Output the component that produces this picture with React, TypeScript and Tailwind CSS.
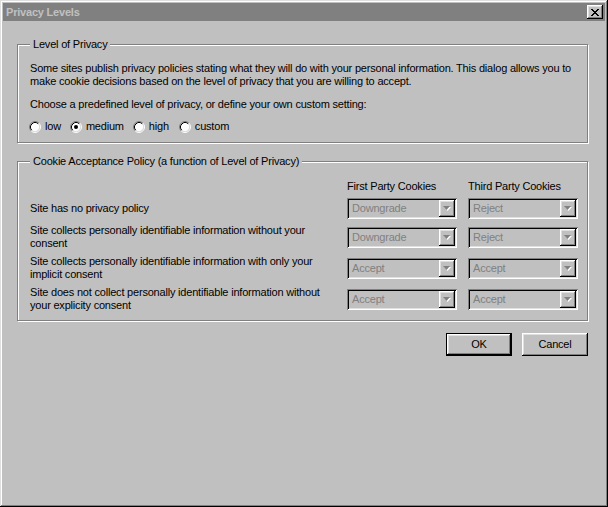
import React from 'react';

const raised =
  'shadow-[inset_-1px_-1px_0_#000,inset_1px_1px_0_#fff,inset_-2px_-2px_0_#808080,inset_2px_2px_0_#dfdfdf]';
const sunken =
  'shadow-[inset_1px_1px_0_#808080,inset_-1px_-1px_0_#fff,inset_2px_2px_0_#000,inset_-2px_-2px_0_#dfdfdf]';

function Radio({ label, checked }: { label: string; checked?: boolean }) {
  return (
    <label className="flex items-center gap-[4px] h-[13px]">
      <svg width="12" height="12" viewBox="0 0 12 12">
        <circle cx="6" cy="6" r="4.5" fill="#fff" />
        <path d="M2.11 9.89 A5.5 5.5 0 0 1 9.89 2.11" stroke="#808080" fill="none" />
        <path d="M9.89 2.11 A5.5 5.5 0 0 1 2.11 9.89" stroke="#fff" fill="none" />
        <path d="M2.82 9.18 A4.5 4.5 0 0 1 9.18 2.82" stroke="#000" fill="none" />
        <path d="M9.18 2.82 A4.5 4.5 0 0 1 2.82 9.18" stroke="#dfdfdf" fill="none" />
        {checked && <circle cx="6" cy="6" r="2" fill="#000" />}
      </svg>
      <span>{label}</span>
    </label>
  );
}

function Select({ value }: { value: string }) {
  return (
    <div className={`flex h-[21px] w-[110px] items-center bg-[#c0c0c0] p-[2px] ${sunken}`}>
      <span className="flex-1 pl-[3px] text-[#808080]">{value}</span>
      <div className={`flex h-[17px] w-[16px] items-center justify-center bg-[#c0c0c0] ${raised}`}>
        <svg width="8" height="5" viewBox="0 0 8 5">
          <path d="M1 1h7l-3.5 4z" fill="#fff" />
          <path d="M0 0h7l-3.5 4z" fill="#808080" />
        </svg>
      </div>
    </div>
  );
}

function Button({ label, isDefault }: { label: string; isDefault?: boolean }) {
  return (
    <div className={isDefault ? 'border border-black' : ''}>
      <button
        className={`flex items-center justify-center bg-[#c0c0c0] ${raised} ${
          isDefault ? 'h-[21px] w-[64px]' : 'h-[23px] w-[66px]'
        }`}
      >
        {label}
      </button>
    </div>
  );
}

const rows = [
  { text: ['Site has no privacy policy'], first: 'Downgrade', third: 'Reject' },
  {
    text: ['Site collects personally identifiable information without your', 'consent'],
    first: 'Downgrade',
    third: 'Reject',
  },
  {
    text: ['Site collects personally identifiable information with only your', 'implicit consent'],
    first: 'Accept',
    third: 'Accept',
  },
  {
    text: ['Site does not collect personally identifiable information without', 'your explicity consent'],
    first: 'Accept',
    third: 'Accept',
  },
];

export default function App() {
  return (
    <div
      className={`flex h-[507px] w-[608px] flex-col bg-[#c0c0c0] p-[3px] text-[11px] leading-[13px] tracking-[-0.2px] text-black font-['Liberation_Sans',Arial,sans-serif] shadow-[inset_-1px_-1px_0_#000,inset_1px_1px_0_#dfdfdf,inset_-2px_-2px_0_#808080,inset_2px_2px_0_#fff]`}
    >
      {/* Title bar */}
      <div className="flex h-[18px] items-center justify-between bg-[#808080] pl-[3px] pr-[2px]">
        <span className="font-bold text-[#c0c0c0]">Privacy Levels</span>
        <div className={`flex h-[14px] w-[16px] items-center justify-center bg-[#c0c0c0] ${raised}`}>
          <svg width="8" height="7" viewBox="0 0 8 7">
            <path d="M0 0h2v1h-2zM6 0h2v1h-2zM1 1h2v1h-2zM5 1h2v1h-2zM2 2h4v1h-4zM3 3h2v1h-2zM2 4h4v1h-4zM1 5h2v1h-2zM5 5h2v1h-2zM0 6h2v1h-2zM6 6h2v1h-2z" fill="#000" />
          </svg>
        </div>
      </div>

      <div className="flex flex-col pl-[14px] pr-[17px]">
        {/* Level of Privacy */}
        <div className="mt-[23px] flex flex-col border border-[#808080] pb-[9px] pl-[12px] shadow-[inset_1px_1px_0_#fff,1px_1px_0_#fff]">
          <span className="-mt-[7px] mb-[11px] w-fit bg-[#c0c0c0] px-[3px]">Level of Privacy</span>
          <p className="whitespace-nowrap">
            Some sites publish privacy policies stating what they will do with your personal information. This dialog allows you to
            <br />
            make cookie decisions based on the level of privacy that you are willing to accept.
          </p>
          <p className="mt-[10px]">Choose a predefined level of privacy, or define your own custom setting:</p>
          <div className="-ml-[1px] mt-[9px] flex gap-[9px]">
            <Radio label="low" />
            <Radio label="medium" checked />
            <Radio label="high" />
            <div className="ml-[1px]">
              <Radio label="custom" />
            </div>
          </div>
        </div>

        {/* Cookie Acceptance Policy */}
        <div className="mt-[18px] flex flex-col border border-[#808080] pb-[8px] pl-[12px] pr-[9px] shadow-[inset_1px_1px_0_#fff,1px_1px_0_#fff]">
          <span className="-mt-[7px] mb-[12px] w-fit bg-[#c0c0c0] px-[3px]">
            Cookie Acceptance Policy (a function of Level of Privacy)
          </span>
          <div className="grid grid-cols-[1fr_110px_110px] items-center gap-x-[11px] gap-y-[5px]">
            <span />
            <span>First Party Cookies</span>
            <span>Third Party Cookies</span>
            {rows.map((r, i) => (
              <React.Fragment key={i}>
                <div className="whitespace-nowrap">
                  {r.text.map((t, j) => (
                    <div key={j}>{t}</div>
                  ))}
                </div>
                <Select value={r.first} />
                <Select value={r.third} />
              </React.Fragment>
            ))}
          </div>
        </div>

        {/* Buttons */}
        <div className="mt-[12px] flex justify-end gap-[10px]">
          <Button label="OK" isDefault />
          <Button label="Cancel" />
        </div>
      </div>
    </div>
  );
}
